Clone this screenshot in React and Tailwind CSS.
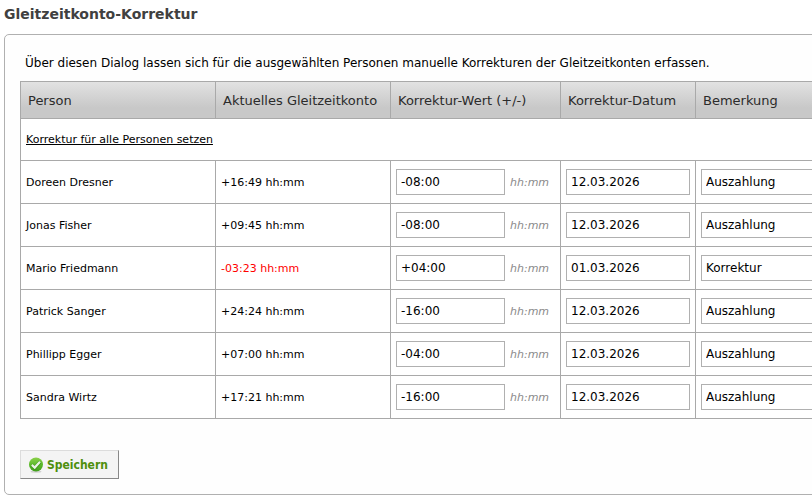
import React, { useState } from 'react';

const initialRows = [
  { person: 'Doreen Dresner', balance: '+16:49', value: '-08:00', date: '12.03.2026', note: 'Auszahlung' },
  { person: 'Jonas Fisher', balance: '+09:45', value: '-08:00', date: '12.03.2026', note: 'Auszahlung' },
  { person: 'Mario Friedmann', balance: '-03:23', value: '+04:00', date: '01.03.2026', note: 'Korrektur' },
  { person: 'Patrick Sanger', balance: '+24:24', value: '-16:00', date: '12.03.2026', note: 'Auszahlung' },
  { person: 'Phillipp Egger', balance: '+07:00', value: '-04:00', date: '12.03.2026', note: 'Auszahlung' },
  { person: 'Sandra Wirtz', balance: '+17:21', value: '-16:00', date: '12.03.2026', note: 'Auszahlung' },
];

const headers = ['Person', 'Aktuelles Gleitzeitkonto', 'Korrektur-Wert (+/-)', 'Korrektur-Datum', 'Bemerkung'];

const cell = 'border border-[#a9a9a9] px-[5px] text-left';
const textCell = 'border border-[#a9a9a9] px-[5px] pt-[2px] text-left';
const field = 'h-[26px] border border-[#b0b0b0] bg-white px-1 text-[12px] text-black outline-none focus:border-[#707070]';

const CheckIcon = () => (
  <svg width="16" height="16" viewBox="0 0 16 16" aria-hidden="true">
    <defs>
      <linearGradient id="ball" x1="0" y1="0" x2="0" y2="1">
        <stop offset="0" stopColor="#8bd04a" />
        <stop offset="0.5" stopColor="#5dbb2c" />
        <stop offset="1" stopColor="#3f9f1a" />
      </linearGradient>
    </defs>
    <ellipse cx="8" cy="14.6" rx="5.5" ry="1.2" fill="#cfcfcf" />
    <circle cx="8" cy="7.5" r="7" fill="url(#ball)" />
    <path d="M3.6 8.1 L6.7 11 L12.2 4.9" fill="none" stroke="#3c9418" strokeWidth="3.4" />
    <path d="M3.8 7.9 L6.7 10.6 L12 4.7" fill="none" stroke="#e9f3e4" strokeWidth="2.2" />
  </svg>
);

const App = () => {
  const [rows, setRows] = useState(initialRows);

  const handleChange = (index, e) => {
    const { name, value } = e.target;
    setRows(rows.map((row, i) => (i === index ? { ...row, [name]: value } : row)));
  };

  // Copies the first person's correction to everybody
  const applyToAll = (e) => {
    e.preventDefault();
    const { value, date, note } = rows[0];
    setRows(rows.map((row) => ({ ...row, value, date, note })));
  };

  return (
    <main className="min-h-screen overflow-x-hidden bg-white pl-1 pt-1 font-['Verdana','DejaVu_Sans',sans-serif] text-[12px] text-black">
      <h1 className="text-[14px] leading-5 font-bold text-[#404040]">Gleitzeitkonto-Korrektur</h1>

      <form
        className="mt-[10px] min-w-[920px] rounded-[5px] border border-[#b0b0b0] bg-[#fefefe] px-[15px] pt-[18px] pb-[15px]"
        onSubmit={(e) => e.preventDefault()}
      >
        <p className="pl-[5px] leading-5">
          Über diesen Dialog lassen sich für die ausgewählten Personen manuelle Korrekturen der Gleitzeitkonten erfassen.
        </p>

        <table className="mt-2 w-full table-fixed border-collapse bg-white text-[11px]">
          <colgroup>
            <col className="w-[195px]" />
            <col className="w-[175px]" />
            <col className="w-[170px]" />
            <col className="w-[135px]" />
            <col />
          </colgroup>
          <thead>
            <tr className="h-[37px] bg-linear-to-b from-[#e2e2e2] to-[#c8c8c8] to-70%">
              {headers.map((header) => (
                <th
                  key={header}
                  scope="col"
                  className="border border-[#a9a9a9] px-[7px] pt-[2px] text-left text-[13px] font-normal whitespace-nowrap text-[#2b2b2b]"
                >
                  {header}
                </th>
              ))}
            </tr>
          </thead>
          <tbody>
            <tr className="h-[42px]">
              <td colSpan={5} className={textCell}>
                <a href="#alle" className="underline" onClick={applyToAll}>
                  Korrektur für alle Personen setzen
                </a>
              </td>
            </tr>
            {rows.map((row, index) => (
              <tr key={row.person} className="h-[43px]">
                <td className={textCell}>{row.person}</td>
                <td className={`${textCell} ${row.balance.startsWith('-') ? 'text-[#ff0000]' : ''}`}>{row.balance} hh:mm</td>
                <td className={cell}>
                  <label className="flex items-center gap-[5px]">
                    <input
                      type="text"
                      name="value"
                      aria-label={`Korrektur-Wert ${row.person}`}
                      className={`${field} w-[109px]`}
                      value={row.value}
                      onChange={(e) => handleChange(index, e)}
                    />
                    <span className="pt-[2px] text-[#8a8a8a] italic">hh:mm</span>
                  </label>
                </td>
                <td className={cell}>
                  <input
                    type="text"
                    name="date"
                    aria-label={`Korrektur-Datum ${row.person}`}
                    className={`${field} block w-full`}
                    value={row.date}
                    onChange={(e) => handleChange(index, e)}
                  />
                </td>
                <td className={cell}>
                  <input
                    type="text"
                    name="note"
                    aria-label={`Bemerkung ${row.person}`}
                    className={`${field} block w-full`}
                    value={row.note}
                    onChange={(e) => handleChange(index, e)}
                  />
                </td>
              </tr>
            ))}
          </tbody>
        </table>

        <button
          type="submit"
          className="mt-[31px] flex h-[29px] items-center gap-[3px] border border-t-[#dcdcdc] border-r-[#888888] border-b-[#888888] border-l-[#dcdcdc] bg-[#f4f4f4] pr-[10px] pl-[7px] font-['Tahoma','DejaVu_Sans_Condensed','Noto_Sans',sans-serif] text-[12px] font-bold text-[#4e8f0c]"
        >
          <CheckIcon />
          Speichern
        </button>
      </form>
    </main>
  );
};

export default App;
